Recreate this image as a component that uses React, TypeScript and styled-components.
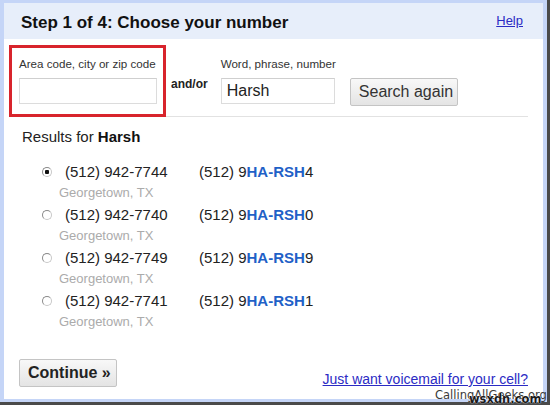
import React from "react";
import styled, { createGlobalStyle } from "styled-components";

const Global = createGlobalStyle`
  html, body { margin: 0; padding: 0; background: #ffffff; }
  body { font-family: "Liberation Sans", Arial, sans-serif; color: #222; }
  * { box-sizing: border-box; }
`;

const Page = styled.div`
  position: relative;
  width: 554px;
  height: 408px;
  overflow: hidden;
`;

const Frame = styled.div`
  width: 550px;
  height: 405px;
  padding: 3px 4px 3px 4px;
  background: #c5d5f7;
  border-right: 3px solid #4a4a4a;
  border-bottom: 3px solid #4a4a4a;
`;

const Panel = styled.div`
  height: 100%;
  background: #ffffff;
  display: flex;
  flex-direction: column;
`;

const Header = styled.div`
  height: 36px;
  flex: none;
  background: #e7eefa;
  display: flex;
  align-items: center;
  justify-content: space-between;
  padding: 0 20px 0 17px;
`;

const Title = styled.h1`
  margin: 0;
  font-size: 17px;
  font-weight: bold;
  color: #111;
  line-height: 20px;
  padding-top: 4px;
`;

const Link = styled.a<{ $size: number }>`
  color: #2b2bc4;
  text-decoration: underline;
  font-size: ${(p) => p.$size}px;
  line-height: 16px;
  cursor: pointer;
`;

const FormRow = styled.div`
  flex: none;
  margin: 6px 15px 0 5px;
  border-bottom: 1px solid #e2e2e2;
  display: flex;
  align-items: flex-start;
`;

const Highlight = styled.div`
  width: 157px;
  height: 72px;
  border: 3px solid #d8242c;
  padding: 9px 6px 0 7px;
  margin-bottom: -1px;
  display: flex;
  flex-direction: column;
`;

const Field = styled.div`
  display: flex;
  flex-direction: column;
  padding-top: 12px;
`;

const Label = styled.label`
  font-size: 11.6px;
  line-height: 14px;
  color: #333;
  margin-bottom: 7px;
  white-space: nowrap;
`;

const TextInput = styled.input<{ $w: number }>`
  width: ${(p) => p.$w}px;
  height: 26px;
  border: 1px solid #dcdcdc;
  border-top-color: #cfcfcf;
  padding: 0 5px;
  font-family: "Liberation Sans", Arial, sans-serif;
  font-size: 16px;
  color: #222;
  outline: none;
  background: #fff;
`;

const AndOr = styled.div`
  font-size: 12px;
  font-weight: bold;
  color: #222;
  margin: 32px 13px 0 5px;
  line-height: 14px;
`;

const Button = styled.button<{ $bold?: boolean }>`
  height: 28px;
  padding: 0 8px;
  border: 1px solid #c4c4c4;
  border-radius: 2px;
  background: linear-gradient(#f8f8f8, #e4e4e4);
  font-family: "Liberation Sans", Arial, sans-serif;
  font-size: 16px;
  font-weight: ${(p) => (p.$bold ? "bold" : "normal")};
  color: ${(p) => (p.$bold ? "#222" : "#333")};
  cursor: pointer;
  white-space: nowrap;
`;

const SearchButton = styled(Button)`
  width: 108px;
  margin: 33px 0 0 14px;
`;

const Results = styled.div`
  flex: none;
  padding: 11px 0 0 18px;
`;

const ResultsTitle = styled.div`
  font-size: 15px;
  line-height: 18px;
  color: #222;
  margin-bottom: 16px;
  b { font-weight: bold; color: #111; }
`;

const List = styled.div`
  display: flex;
  flex-direction: column;
  gap: 5px;
  padding-left: 19px;
`;

const Row = styled.div`
  display: grid;
  grid-template-columns: 24px 134px auto;
  grid-template-rows: 20px 18px;
  align-items: center;
`;

const Radio = styled.span<{ $checked?: boolean }>`
  width: 10px;
  height: 10px;
  margin-left: 1px;
  border-radius: 50%;
  border: 1px solid #8a8a8a;
  border-right-color: #c8c8c8;
  border-bottom-color: #c8c8c8;
  background: ${(p) =>
    p.$checked
      ? "radial-gradient(circle, #111 0 2px, #fff 2.5px)"
      : "#fff"};
`;

const Number = styled.span`
  font-size: 15px;
  color: #222;
  line-height: 20px;
`;

const Vanity = styled.span`
  font-size: 15px;
  color: #222;
  line-height: 20px;
  b { color: #1f61c7; font-weight: bold; }
`;

const Location = styled.span`
  grid-column: 2 / 4;
  font-size: 13px;
  color: #ababab;
  line-height: 18px;
  margin-left: -6px;
  padding-top: 4px;
`;

const Footer = styled.div`
  margin-top: auto;
  display: flex;
  justify-content: space-between;
  align-items: flex-end;
  padding: 0 15px 12px 15px;
`;

const ContinueButton = styled(Button)`
  width: 98px;
`;

const Watermark = styled.div`
  position: absolute;
  left: 435px;
  bottom: 7px;
  font-family: "DejaVu Sans", sans-serif;
  font-size: 11.5px;
  color: #3a3a3a;
  line-height: 12px;
  white-space: nowrap;
`;

const Watermark2 = styled.div`
  position: absolute;
  left: 469px;
  bottom: 3px;
  font-family: "DejaVu Sans", sans-serif;
  font-size: 11.5px;
  font-weight: bold;
  color: #1a1a1a;
  line-height: 11px;
  white-space: nowrap;
  text-shadow: 0 0 1px #fff, 0 0 1px #fff;
`;

const results = [
  { num: "(512) 942-7744", last: "4", checked: true },
  { num: "(512) 942-7740", last: "0" },
  { num: "(512) 942-7749", last: "9" },
  { num: "(512) 942-7741", last: "1" },
];

export default function App() {
  return (
    <Page>
      <Global />
      <Frame>
        <Panel>
          <Header>
            <Title>Step 1 of 4: Choose your number</Title>
            <Link $size={13}>Help</Link>
          </Header>
          <FormRow>
            <Highlight>
              <Label>Area code, city or zip code</Label>
              <TextInput $w={138} defaultValue="" />
            </Highlight>
            <AndOr>and/or</AndOr>
            <Field>
              <Label>Word, phrase, number</Label>
              <TextInput $w={114} defaultValue="Harsh" />
            </Field>
            <SearchButton>Search again</SearchButton>
          </FormRow>
          <Results>
            <ResultsTitle>
              Results for <b>Harsh</b>
            </ResultsTitle>
            <List>
              {results.map((r) => (
                <Row key={r.num}>
                  <Radio $checked={r.checked} />
                  <Number>{r.num}</Number>
                  <Vanity>
                    (512) 9<b>HA-RSH</b>
                    {r.last}
                  </Vanity>
                  <Location>Georgetown, TX</Location>
                </Row>
              ))}
            </List>
          </Results>
          <Footer>
            <ContinueButton $bold>Continue »</ContinueButton>
            <Link $size={14}>Just want voicemail for your cell?</Link>
          </Footer>
        </Panel>
      </Frame>
      <Watermark>CallingAllGeeks.org</Watermark>
      <Watermark2>wsxdn.com</Watermark2>
    </Page>
  );
}
